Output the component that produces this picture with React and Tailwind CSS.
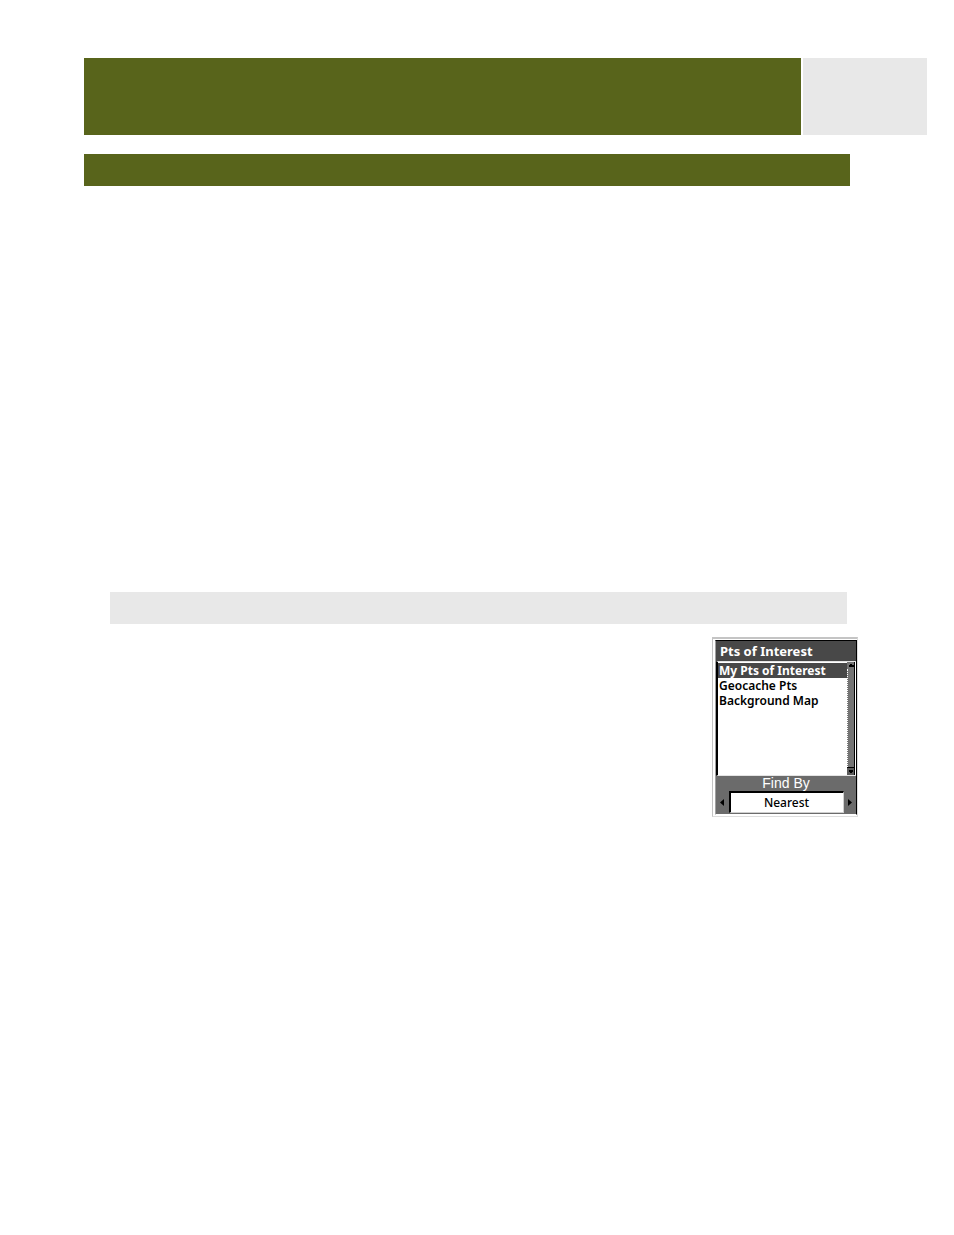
import { useState } from 'react';

const CATEGORIES = ['My Pts of Interest', 'Geocache Pts', 'Background Map'];

function PageHeader() {
  return (
    <header>
      <div className="flex gap-0.5 h-[77px] pl-[84px] pr-[27px]">
        <div className="flex-1 bg-[#58641b]" />
        <div className="w-31 bg-[#e8e8e8]" />
      </div>
      <div className="mt-[19px] ml-[84px] mr-26 h-8 bg-[#58641b]" />
    </header>
  );
}

function ScrollBar() {
  return (
    <div className="flex w-2 flex-col border-r border-black">
      <svg viewBox="0 0 7 7" className="h-[7px] w-[7px]" shapeRendering="crispEdges">
        <path d="M0 0h7v7H0z" fill="#747474" />
        <path d="M3 2h2v1h2v2H2V3h1z" fill="#000" />
      </svg>
      <div className="flex-1 border-l border-dotted border-white bg-[#747474]" />
      <svg viewBox="0 0 7 8" className="h-2 w-[7px]" shapeRendering="crispEdges">
        <path d="M0 0h7v8H0z" fill="#5c5c5c" />
        <path d="M0 0h7v1H0zM2 3h4v2H5v1H3V5H2z" fill="#000" />
      </svg>
    </div>
  );
}

function ArrowButton({ label, path }) {
  return (
    <button aria-label={label} className="grid w-3 place-items-center">
      <svg viewBox="0 0 4 7" className="h-[7px] w-1">
        <path d={path} fill="#000" />
      </svg>
    </button>
  );
}

function PoiScreen() {
  const [selected, setSelected] = useState(CATEGORIES[0]);

  return (
    <section className="w-[146px] border border-t-2 border-[#c4c4c4] border-r-[#dedede] border-b-[#dedede] py-px pl-0.5 font-['Noto_Sans',sans-serif] text-black">
      <div className="border border-[#a0a0a0] border-t-black border-r-black border-b-white bg-[#6b6b6b]">
        <h2 className="h-5 bg-[#484848] pl-1 text-[13px] leading-5 font-bold text-white">
          Pts of Interest
        </h2>

        {/* Category list */}
        <div className="flex h-[115px] border-y border-l-2 border-y-[#e4e4e4] border-l-black bg-white pr-px">
          <ul className="flex-1 pt-px">
            {CATEGORIES.map((name) => (
              <li key={name}>
                <button
                  onClick={() => setSelected(name)}
                  className={
                    name === selected
                      ? 'block h-[15px] w-full bg-[#484848] pl-px text-left text-[12px] leading-[15px] font-bold whitespace-nowrap text-white'
                      : 'block h-[15px] w-full pl-px text-left text-[12px] leading-[15px] font-semibold whitespace-nowrap'
                  }
                >
                  {name}
                </button>
              </li>
            ))}
          </ul>
          <ScrollBar />
        </div>

        {/* Search mode */}
        <label
          htmlFor="find-by"
          className="block h-[15px] text-center font-['Liberation_Sans',sans-serif] text-[14px] leading-[15px] font-medium text-white"
        >
          Find By
        </label>
        <div className="flex h-[23px] justify-between pb-px">
          <ArrowButton label="Previous" path="M4 0v7L0 3.5z" />
          <input
            id="find-by"
            readOnly
            value="Nearest"
            className="w-[115px] border-t-2 border-r border-b border-l-2 border-t-black border-l-black border-r-[#d0d0d0] border-b-[#d0d0d0] bg-white text-center text-[12px] leading-4 font-medium"
          />
          <ArrowButton label="Next" path="M0 0v7l4-3.5z" />
        </div>
      </div>
    </section>
  );
}

export default function App() {
  return (
    <div className="min-h-screen bg-white pt-[58px]">
      <PageHeader />
      <main className="mt-[406px] ml-[110px]">
        <div className="mr-[107px] h-8 bg-[#e8e8e8]" />
        <div className="mt-[13px] mr-24 flex justify-end">
          <PoiScreen />
        </div>
      </main>
    </div>
  );
}
